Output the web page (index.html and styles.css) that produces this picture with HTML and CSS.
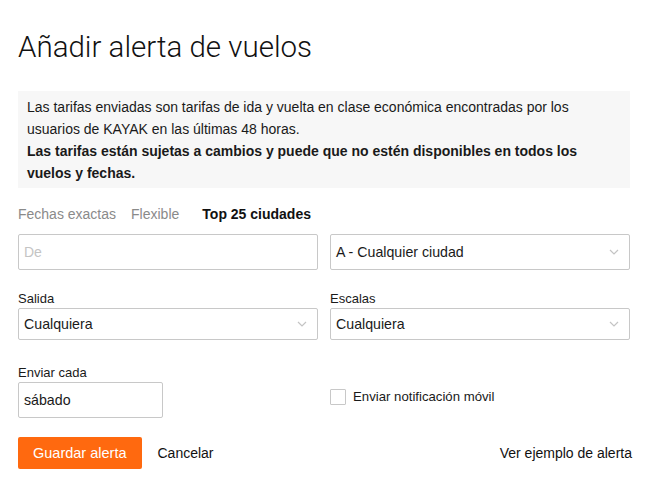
FILE: index.html
```html
<!DOCTYPE html>
<html lang="es">
<head>
  <meta charset="UTF-8" />
  <title>Añadir alerta de vuelos</title>
  <link rel="stylesheet" href="styles.css">
</head>
<body>
  <div class="dialog">
    <h1>Añadir alerta de vuelos</h1>

    <div class="notice">
      <p>Las tarifas enviadas son tarifas de ida y vuelta en clase económica encontradas por los usuarios de KAYAK en las últimas 48 horas.</p>
      <p class="strong">Las tarifas están sujetas a cambios y puede que no estén disponibles en todos los vuelos y fechas.</p>
    </div>

    <ul class="tabs">
      <li>Fechas exactas</li>
      <li>Flexible</li>
      <li class="active">Top 25 ciudades</li>
    </ul>

    <div class="row first">
      <div class="field tall"><span class="placeholder">De</span></div>
      <div class="field tall select">A - Cualquier ciudad
        <svg class="chev" width="10" height="6" viewBox="0 0 10 6"><path d="M1 1l4 4 4-4" fill="none" stroke="#c4c4c4" stroke-width="1.2"/></svg>
      </div>
    </div>

    <div class="row second">
      <label class="group">
        <span class="label">Salida</span>
        <div class="field select">Cualquiera
          <svg class="chev" width="10" height="6" viewBox="0 0 10 6"><path d="M1 1l4 4 4-4" fill="none" stroke="#c4c4c4" stroke-width="1.2"/></svg>
        </div>
      </label>
      <label class="group">
        <span class="label">Escalas</span>
        <div class="field select">Cualquiera
          <svg class="chev" width="10" height="6" viewBox="0 0 10 6"><path d="M1 1l4 4 4-4" fill="none" stroke="#c4c4c4" stroke-width="1.2"/></svg>
        </div>
      </label>
    </div>

    <div class="row">
      <label class="group">
        <span class="label">Enviar cada</span>
        <div class="field tall small">sábado</div>
      </label>
      <label class="check">
        <span class="box"></span>
        Enviar notificación móvil
      </label>
    </div>

    <div class="actions">
      <button class="save">Guardar alerta</button>
      <a class="cancel" href="#">Cancelar</a>
      <a class="example" href="#">Ver ejemplo de alerta</a>
    </div>
  </div>
</body>
</html>
```

FILE: styles.css
```css
body {
  margin: 0;
  background: #ffffff;
  font-family: 'Liberation Sans', Arial, sans-serif;
  color: #1a1a1a;
}
.dialog {
  padding: 30px 20px 0 18px;
}
h1 {
  font-family: 'Roboto', sans-serif;
  font-weight: 300;
  font-size: 29.5px;
  margin: 0 0 27px;
  color: #111;
}
.notice {
  background: #f7f7f7;
  padding: 5px 9px 4px;
  font-size: 14px;
  line-height: 22px;
}
.notice p {
  margin: 0;
}
.notice .strong {
  font-weight: bold;
}
.tabs {
  list-style: none;
  display: flex;
  gap: 15px;
  margin: 18px 0 12px;
  padding: 0;
  font-size: 14px;
  color: #8a8a8a;
}
.tabs li:nth-child(2) {
  margin-right: 8px;
}
.tabs .active {
  color: #111;
  font-weight: bold;
}
.row {
  display: grid;
  grid-template-columns: 1fr 1fr;
  gap: 12px;
  margin-bottom: 22px;
}
.row.first {
  margin-bottom: 21px;
}
.row.second {
  margin-bottom: 25px;
}
.group {
  display: block;
}
.label {
  display: block;
  font-size: 13px;
  margin-bottom: 2px;
}
.field {
  position: relative;
  box-sizing: border-box;
  height: 32px;
  border: 1px solid #c8c8c8;
  border-radius: 2px;
  padding: 0 5px;
  font-size: 14.2px;
  display: flex;
  align-items: center;
}
.field.tall {
  height: 36px;
}
.field.small {
  width: 145px;
}
.placeholder {
  color: #c4c4c4;
  font-size: 14px;
}
.chev {
  position: absolute;
  right: 10px;
  top: 50%;
  margin-top: -3px;
}
.check {
  display: flex;
  align-items: center;
  gap: 7px;
  font-size: 13.2px;
  margin-top: 10px;
}
.box {
  width: 14px;
  height: 14px;
  border: 1px solid #c8c8c8;
  border-radius: 1px;
}
.actions {
  display: flex;
  align-items: center;
  margin-top: -3px;
}
.save {
  background: #ff690f;
  color: #fff;
  border: none;
  border-radius: 2px;
  height: 32px;
  padding: 0 15px;
  font-family: inherit;
  font-size: 14.5px;
}
.cancel {
  color: #111;
  text-decoration: none;
  font-size: 14px;
  margin-left: 16px;
}
.example {
  margin-left: auto;
  color: #111;
  text-decoration: none;
  font-size: 14px;
  margin-right: -2px;
}
```
